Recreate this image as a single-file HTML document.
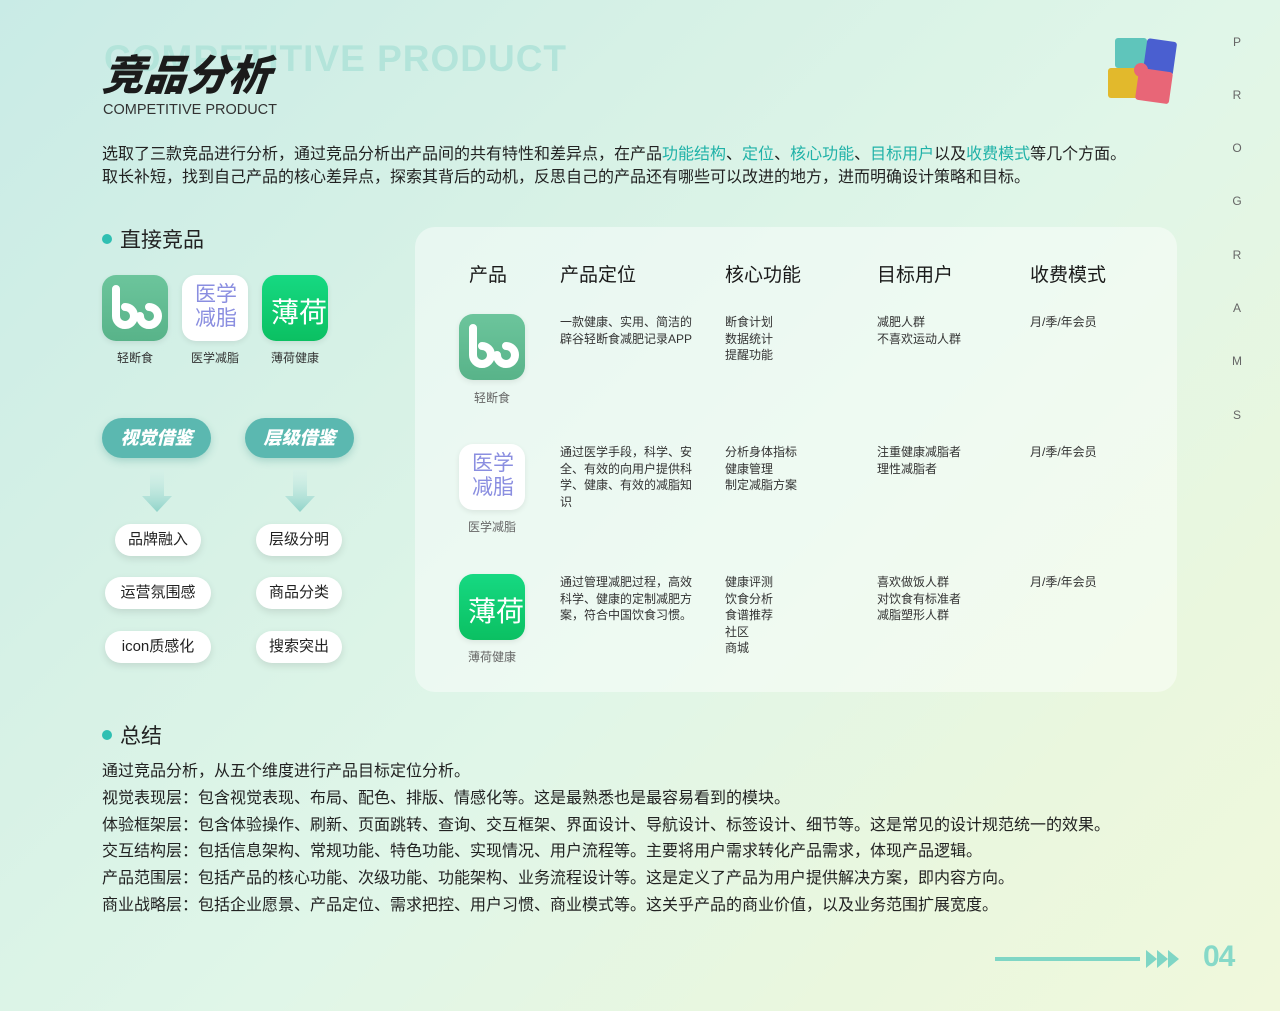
<!DOCTYPE html>
<html><head><meta charset="utf-8"><style>
*{margin:0;padding:0;box-sizing:border-box}
body{width:1280px;height:1011px;overflow:hidden;font-family:"Liberation Sans","Noto Sans CJK SC",sans-serif;color:#222;position:relative;
background:linear-gradient(135deg,#c9ebe6 0%,#d6f1e6 30%,#e0f6e8 55%,#eaf7de 80%,#f0f8dc 100%);}
.a{position:absolute;white-space:nowrap}
.ghost{left:104px;top:38px;font-size:37px;font-weight:900;color:#b3e4da;letter-spacing:1px;font-family:"Liberation Sans",sans-serif}
.title{left:103px;top:42px;font-size:42px;font-weight:900;font-style:italic;color:#1b1b1b;letter-spacing:0px;transform:skewX(-6deg)}
.sub{left:103px;top:102px;font-size:14.5px;color:#333}
.intro{left:102px;top:144px;font-size:16px;line-height:22.5px;color:#222}
.hl{color:#20b2a8}
.h2{font-size:21px;color:#222}
.dot{display:inline-block;width:10px;height:10px;border-radius:50%;background:#2fbfb2;margin-right:8px;vertical-align:3px}
.ic{position:absolute;width:66px;height:66px;border-radius:14px;overflow:hidden;box-shadow:0 2px 6px rgba(0,0,0,.08)}
.g1{background:linear-gradient(#6cc59c,#58b389)}
.g2{background:#fff}
.g3{background:linear-gradient(#16d982,#0bc062)}
.lbl{font-size:12px;color:#333;text-align:center;width:80px}
.pill{position:absolute;height:40px;border-radius:20px;background:#5bb8b0;color:#fff;font-weight:900;font-style:italic;font-size:18px;text-align:center;line-height:40px;box-shadow:0 3px 8px rgba(60,150,140,.3)}
.sp{position:absolute;height:32px;border-radius:16px;background:#fff;color:#222;font-size:15px;text-align:center;line-height:32px;box-shadow:0 3px 8px rgba(0,0,0,.1)}
.arrow{position:absolute;width:30px;height:42px}
.card{left:415px;top:227px;width:762px;height:465px;border-radius:20px;background:rgba(255,255,255,.45);position:absolute}
.th{font-size:19px;color:#1a1a1a;top:260px}
.td{font-size:12px;line-height:16.5px;color:#333;white-space:normal}
.sum{left:102px;top:759px;font-size:16px;line-height:26.8px;color:#222}
.vl{left:1230px;width:14px;text-align:center;font-size:12px;color:#666}
</style></head><body>
<div class="a ghost">COMPETITIVE PRODUCT</div>
<div class="a title">竞品分析</div>
<div class="a sub">COMPETITIVE PRODUCT</div>
<div class="a intro">选取了三款竞品进行分析，通过竞品分析出产品间的共有特性和差异点，在产品<span class="hl">功能结构</span>、<span class="hl">定位</span>、<span class="hl">核心功能</span>、<span class="hl">目标用户</span>以及<span class="hl">收费模式</span>等几个方面。<br>取长补短，找到自己产品的核心差异点，探索其背后的动机，反思自己的产品还有哪些可以改进的地方，进而明确设计策略和目标。</div>

<svg class="a" style="left:1105px;top:34px" width="76" height="72" viewBox="0 0 76 72">
<rect x="10" y="4" width="32" height="30" rx="3" fill="#5fc5bb"/>
<rect x="40" y="6" width="30" height="34" rx="3" fill="#4a5fd0" transform="rotate(8 55 23)"/>
<rect x="3" y="34" width="32" height="30" rx="3" fill="#e2b92c"/>
<rect x="32" y="36" width="34" height="32" rx="3" fill="#e86677" transform="rotate(8 49 52)"/>
<circle cx="36" cy="36" r="7" fill="#e86677"/>
</svg>

<div class="a vl" style="top:35px">P</div><div class="a vl" style="top:88px">R</div><div class="a vl" style="top:141px">O</div><div class="a vl" style="top:194px">G</div><div class="a vl" style="top:248px">R</div><div class="a vl" style="top:301px">A</div><div class="a vl" style="top:354px">M</div><div class="a vl" style="top:408px">S</div>

<div class="a h2" style="left:102px;top:224px"><span class="dot"></span>直接竞品</div>

<div class="ic g1" style="left:102px;top:275px"><svg width="66" height="66"><path d="M14 14v27a9 9 0 0 0 18 0a9 9 0 0 0-9-9" stroke="#fff" stroke-width="8" fill="none" stroke-linecap="round"/><path d="M38 41a9 9 0 1 0 9-9" stroke="#fff" stroke-width="8" fill="none" stroke-linecap="round"/></svg></div>
<div class="ic g2" style="left:182px;top:275px"><div style="position:absolute;left:13px;top:8px;font-size:21px;line-height:24px;color:#8a8ee0">医学<br>减脂</div></div>
<div class="ic g3" style="left:262px;top:275px"><div style="position:absolute;left:9px;top:16px;font-size:28px;color:#fff">薄荷</div></div>
<div class="a lbl" style="left:95px;top:349px">轻断食</div>
<div class="a lbl" style="left:175px;top:349px">医学减脂</div>
<div class="a lbl" style="left:255px;top:349px">薄荷健康</div>

<div class="pill" style="left:102px;top:418px;width:109px">视觉借鉴</div>
<div class="pill" style="left:245px;top:418px;width:109px">层级借鉴</div>
<svg class="arrow" style="left:142px;top:470px" viewBox="0 0 30 42"><defs><linearGradient id="ag" x1="0" y1="0" x2="0" y2="1"><stop offset="0" stop-color="#d4efe9" stop-opacity=".3"/><stop offset="1" stop-color="#8fd3c9"/></linearGradient></defs><path d="M8 0h14v26h8L15 42 0 26h8z" fill="url(#ag)"/></svg>
<svg class="arrow" style="left:285px;top:470px" viewBox="0 0 30 42"><path d="M8 0h14v26h8L15 42 0 26h8z" fill="url(#ag)"/></svg>

<div class="sp" style="left:115px;top:524px;width:86px">品牌融入</div>
<div class="sp" style="left:105px;top:577px;width:106px">运营氛围感</div>
<div class="sp" style="left:105px;top:631px;width:106px">icon质感化</div>
<div class="sp" style="left:256px;top:524px;width:86px">层级分明</div>
<div class="sp" style="left:256px;top:577px;width:86px">商品分类</div>
<div class="sp" style="left:256px;top:631px;width:86px">搜索突出</div>

<div class="card"></div>
<div class="a th" style="left:469px">产品</div>
<div class="a th" style="left:560px">产品定位</div>
<div class="a th" style="left:725px">核心功能</div>
<div class="a th" style="left:877px">目标用户</div>
<div class="a th" style="left:1030px">收费模式</div>

<div class="ic g1" style="left:459px;top:314px"><svg width="66" height="66"><path d="M14 14v27a9 9 0 0 0 18 0a9 9 0 0 0-9-9" stroke="#fff" stroke-width="8" fill="none" stroke-linecap="round"/><path d="M38 41a9 9 0 1 0 9-9" stroke="#fff" stroke-width="8" fill="none" stroke-linecap="round"/></svg></div>
<div class="ic g2" style="left:459px;top:444px"><div style="position:absolute;left:13px;top:8px;font-size:21px;line-height:24px;color:#8a8ee0">医学<br>减脂</div></div>
<div class="ic g3" style="left:459px;top:574px"><div style="position:absolute;left:9px;top:16px;font-size:28px;color:#fff">薄荷</div></div>
<div class="a lbl" style="left:452px;top:389px;color:#666">轻断食</div>
<div class="a lbl" style="left:452px;top:518px;color:#666">医学减脂</div>
<div class="a lbl" style="left:452px;top:648px;color:#666">薄荷健康</div>

<div class="a td" style="left:560px;top:314px;width:135px">一款健康、实用、简洁的辟谷轻断食减肥记录APP</div>
<div class="a td" style="left:725px;top:314px">断食计划<br>数据统计<br>提醒功能</div>
<div class="a td" style="left:877px;top:314px">减肥人群<br>不喜欢运动人群</div>
<div class="a td" style="left:1030px;top:314px">月/季/年会员</div>

<div class="a td" style="left:560px;top:444px;width:135px">通过医学手段，科学、安全、有效的向用户提供科学、健康、有效的减脂知识</div>
<div class="a td" style="left:725px;top:444px">分析身体指标<br>健康管理<br>制定减脂方案</div>
<div class="a td" style="left:877px;top:444px">注重健康减脂者<br>理性减脂者</div>
<div class="a td" style="left:1030px;top:444px">月/季/年会员</div>

<div class="a td" style="left:560px;top:574px;width:135px">通过管理减肥过程，高效科学、健康的定制减肥方案，符合中国饮食习惯。</div>
<div class="a td" style="left:725px;top:574px">健康评测<br>饮食分析<br>食谱推荐<br>社区<br>商城</div>
<div class="a td" style="left:877px;top:574px">喜欢做饭人群<br>对饮食有标准者<br>减脂塑形人群</div>
<div class="a td" style="left:1030px;top:574px">月/季/年会员</div>

<div class="a h2" style="left:102px;top:720px"><span class="dot"></span>总结</div>
<div class="a sum">通过竞品分析，从五个维度进行产品目标定位分析。<br>视觉表现层：包含视觉表现、布局、配色、排版、情感化等。这是最熟悉也是最容易看到的模块。<br>体验框架层：包含体验操作、刷新、页面跳转、查询、交互框架、界面设计、导航设计、标签设计、细节等。这是常见的设计规范统一的效果。<br>交互结构层：包括信息架构、常规功能、特色功能、实现情况、用户流程等。主要将用户需求转化产品需求，体现产品逻辑。<br>产品范围层：包括产品的核心功能、次级功能、功能架构、业务流程设计等。这是定义了产品为用户提供解决方案，即内容方向。<br>商业战略层：包括企业愿景、产品定位、需求把控、用户习惯、商业模式等。这关乎产品的商业价值，以及业务范围扩展宽度。</div>

<div class="a" style="left:995px;top:957px;width:145px;height:4px;background:#7fd6c5"></div>
<svg class="a" style="left:1146px;top:950px" width="34" height="18"><path d="M0 0l11 9-11 9zM11 0l11 9-11 9zM22 0l11 9-11 9z" fill="#7fd6c5"/></svg>
<div class="a" style="left:1203px;top:940px;font-size:30px;font-weight:900;color:#86d9c8;letter-spacing:-1px">04</div>
</body></html>
